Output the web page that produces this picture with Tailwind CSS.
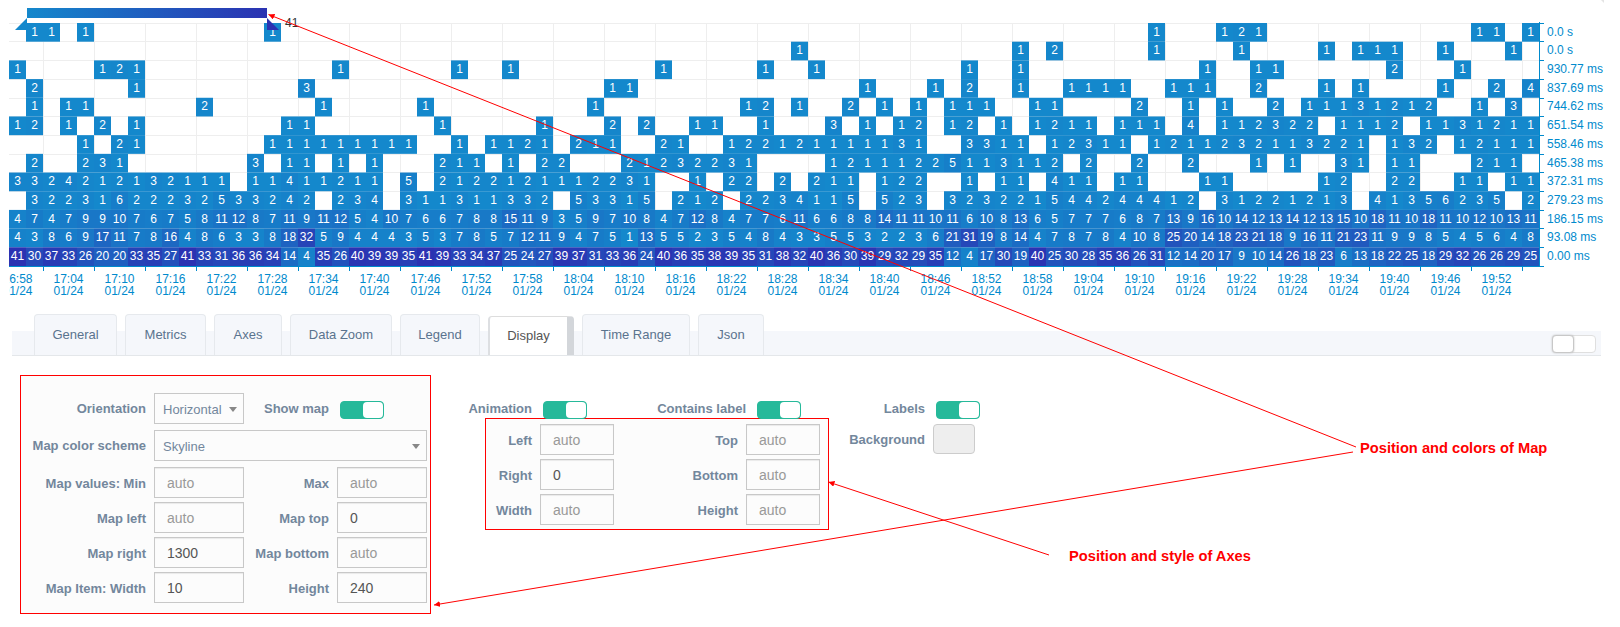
<!DOCTYPE html>
<html lang="en">
<head>
<meta charset="utf-8">
<title>Heatmap display settings</title>
<script src="https://cdn.jsdelivr.net/npm/@tailwindcss/browser@4"></script>
</head>
<body class="relative h-[627px] w-[1620px] overflow-hidden bg-white font-['Liberation_Sans',Arial,sans-serif] text-[13px] text-[#73879c]">

<section class="ml-[9px] h-[305px]">
  <svg width="1611" height="305" viewBox="9 0 1611 305" class="block overflow-hidden text-[12px]">
    <defs>
      <linearGradient id="skyline"><stop offset="0" stop-color="#1488cc"/><stop offset="1" stop-color="#2b32b2"/></linearGradient>
    </defs>
    <g id="grid" fill="#eeeeee"></g>
    <g id="cells"></g>
    <g id="values" fill="#ffffff" text-anchor="middle"></g>
    <g id="axis" fill="#008acd"></g>
    <rect x="27" y="8" width="240" height="10" fill="url(#skyline)"/>
    <path d="M27 18V30H15Z" fill="#1488cc"/>
    <path d="M267 18V30H279Z" fill="#2b32b2"/>
    <text x="285" y="27" fill="#333333">41</text>
    <path d="M1601 0H1604V3Z" fill="#e4e4e4"/>
  </svg>
</section>

<nav class="ml-3 flex h-[51px] w-[1589px] items-end">
  <div class="flex h-[25px] w-full items-end border-b border-[#e4e7ea] bg-[#f5f7fb] pl-[22px]">
    <div class="flex items-end gap-2 leading-[15px] text-[#5a738e]">
      <a class="h-[41px] w-[83px] rounded-t-[4px] border border-b-0 border-[#e6e9ed] bg-[#f5f7fb] pt-3 text-center">General</a>
      <a class="h-[41px] w-[81px] rounded-t-[4px] border border-b-0 border-[#e6e9ed] bg-[#f5f7fb] pt-3 text-center">Metrics</a>
      <a class="h-[41px] w-[68px] rounded-t-[4px] border border-b-0 border-[#e6e9ed] bg-[#f5f7fb] pt-3 text-center">Axes</a>
      <a class="h-[41px] w-[102px] rounded-t-[4px] border border-b-0 border-[#e6e9ed] bg-[#f5f7fb] pt-3 text-center">Data Zoom</a>
      <a class="h-[41px] w-[80px] rounded-t-[4px] border border-b-0 border-[#e6e9ed] bg-[#f5f7fb] pt-3 text-center">Legend</a>
      <a class="h-[39px] w-[86px] rounded-t-[4px] border border-r-[7px] border-b-0 border-l-2 border-[#d3d6da] border-t-[#dddddd] border-l-[#dddfe2] bg-white pt-[11px] text-center text-[#555]">Display</a>
      <a class="h-[41px] w-[108px] rounded-t-[4px] border border-b-0 border-[#e6e9ed] bg-[#f5f7fb] pt-3 text-center">Time Range</a>
      <a class="h-[41px] w-[66px] rounded-t-[4px] border border-b-0 border-[#e6e9ed] bg-[#f5f7fb] pt-3 text-center">Json</a>
    </div>
    <div class="mr-[5px] mb-[2px] ml-auto h-[18px] w-[44px] rounded-[4px] border border-[#dfdfdf] bg-white">
      <div class="-mt-px -ml-px h-[18px] w-[22px] rounded-[4px] border border-[#c8c8c8] bg-white shadow-[0_0_2px_#bbb]"></div>
    </div>
  </div>
</nav>

<main class="flex items-start pt-[19px] pl-5 font-bold">
  <section class="h-[239px] w-[411px] border border-[#ff0000] bg-[#fcfcfc] pt-[17px]">
    <div class="flex h-[37px] items-start">
      <label class="w-[125px] pt-2 text-right leading-[15px]">Orientation</label>
      <div class="ml-2 flex h-[31px] w-[90px] items-center justify-between border border-[#c8c8c8] pt-[3px] pr-[6px] pl-2 font-normal">Horizontal<i class="mb-[2px] h-0 w-0 border-x-4 border-t-[5px] border-x-transparent border-t-[#888]"></i></div>
      <label class="w-[85px] pt-2 text-right leading-[15px]">Show map</label>
      <div class="mt-2 ml-[11px] flex h-[18px] w-[44px] justify-end rounded-[4px] border border-[#26b99a] bg-[#26b99a]"><i class="h-4 w-5 rounded-[4px] bg-white"></i></div>
    </div>
    <div class="flex h-[37px] items-start">
      <label class="w-[125px] pt-2 text-right leading-[15px]">Map color scheme</label>
      <div class="ml-2 flex h-[31px] w-[273px] items-center justify-between border border-[#c8c8c8] pt-[3px] pr-[6px] pl-2 font-normal">Skyline<i class="mb-[2px] h-0 w-0 border-x-4 border-t-[5px] border-x-transparent border-t-[#888]"></i></div>
    </div>
    <div class="flex h-[35px] items-start">
      <label class="w-[125px] pt-[9px] text-right leading-[15px]">Map values: Min</label>
      <div class="ml-2 h-[31px] w-[90px] border border-[#c8c8c8] pt-[7px] pl-3 text-[14px] leading-4 font-normal text-[#999] shadow-[inset_0_1px_1px_rgba(0,0,0,0.075)]">auto</div>
      <label class="w-[85px] pt-[9px] text-right leading-[15px]">Max</label>
      <div class="ml-2 h-[31px] w-[90px] border border-[#c8c8c8] pt-[7px] pl-3 text-[14px] leading-4 font-normal text-[#999] shadow-[inset_0_1px_1px_rgba(0,0,0,0.075)]">auto</div>
    </div>
    <div class="flex h-[35px] items-start">
      <label class="w-[125px] pt-[9px] text-right leading-[15px]">Map left</label>
      <div class="ml-2 h-[31px] w-[90px] border border-[#c8c8c8] pt-[7px] pl-3 text-[14px] leading-4 font-normal text-[#999] shadow-[inset_0_1px_1px_rgba(0,0,0,0.075)]">auto</div>
      <label class="w-[85px] pt-[9px] text-right leading-[15px]">Map top</label>
      <div class="ml-2 h-[31px] w-[90px] border border-[#c8c8c8] pt-[7px] pl-3 text-[14px] leading-4 font-normal text-[#555] shadow-[inset_0_1px_1px_rgba(0,0,0,0.075)]">0</div>
    </div>
    <div class="flex h-[35px] items-start">
      <label class="w-[125px] pt-[9px] text-right leading-[15px]">Map right</label>
      <div class="ml-2 h-[31px] w-[90px] border border-[#c8c8c8] pt-[7px] pl-3 text-[14px] leading-4 font-normal text-[#555] shadow-[inset_0_1px_1px_rgba(0,0,0,0.075)]">1300</div>
      <label class="w-[85px] pt-[9px] text-right leading-[15px]">Map bottom</label>
      <div class="ml-2 h-[31px] w-[90px] border border-[#c8c8c8] pt-[7px] pl-3 text-[14px] leading-4 font-normal text-[#999] shadow-[inset_0_1px_1px_rgba(0,0,0,0.075)]">auto</div>
    </div>
    <div class="flex h-[35px] items-start">
      <label class="w-[125px] pt-[9px] text-right leading-[15px]">Map Item: Width</label>
      <div class="ml-2 h-[31px] w-[90px] border border-[#c8c8c8] pt-[7px] pl-3 text-[14px] leading-4 font-normal text-[#555] shadow-[inset_0_1px_1px_rgba(0,0,0,0.075)]">10</div>
      <label class="w-[85px] pt-[9px] text-right leading-[15px]">Height</label>
      <div class="ml-2 h-[31px] w-[90px] border border-[#c8c8c8] pt-[7px] pl-3 text-[14px] leading-4 font-normal text-[#555] shadow-[inset_0_1px_1px_rgba(0,0,0,0.075)]">240</div>
    </div>
  </section>

  <section class="ml-[34px] w-[364px] pt-[26px]">
    <div class="flex h-[17px] items-start">
      <label class="w-[67px] text-right leading-[15px]">Animation</label>
      <div class="ml-[11px] flex h-[18px] w-[44px] justify-end rounded-[4px] border border-[#26b99a] bg-[#26b99a]"><i class="h-4 w-5 rounded-[4px] bg-white"></i></div>
      <label class="w-[159px] text-right leading-[15px]">Contains label</label>
      <div class="ml-[11px] flex h-[18px] w-[44px] justify-end rounded-[4px] border border-[#26b99a] bg-[#26b99a]"><i class="h-4 w-5 rounded-[4px] bg-white"></i></div>
    </div>
    <div class="ml-5 h-[112px] w-[344px] border border-[#ff0000] bg-[#fcfcfc] pt-[5px]">
      <div class="flex h-[35px] items-start">
        <label class="w-[46px] pt-[9px] text-right leading-[15px]">Left</label>
        <div class="ml-2 h-[31px] w-[74px] border border-[#c8c8c8] pt-[7px] pl-3 text-[14px] leading-4 font-normal text-[#999] shadow-[inset_0_1px_1px_rgba(0,0,0,0.075)]">auto</div>
        <label class="w-[124px] pt-[9px] text-right leading-[15px]">Top</label>
        <div class="ml-2 h-[31px] w-[74px] border border-[#c8c8c8] pt-[7px] pl-3 text-[14px] leading-4 font-normal text-[#999] shadow-[inset_0_1px_1px_rgba(0,0,0,0.075)]">auto</div>
      </div>
      <div class="flex h-[35px] items-start">
        <label class="w-[46px] pt-[9px] text-right leading-[15px]">Right</label>
        <div class="ml-2 h-[31px] w-[74px] border border-[#c8c8c8] pt-[7px] pl-3 text-[14px] leading-4 font-normal text-[#555] shadow-[inset_0_1px_1px_rgba(0,0,0,0.075)]">0</div>
        <label class="w-[124px] pt-[9px] text-right leading-[15px]">Bottom</label>
        <div class="ml-2 h-[31px] w-[74px] border border-[#c8c8c8] pt-[7px] pl-3 text-[14px] leading-4 font-normal text-[#999] shadow-[inset_0_1px_1px_rgba(0,0,0,0.075)]">auto</div>
      </div>
      <div class="flex h-[35px] items-start">
        <label class="w-[46px] pt-[9px] text-right leading-[15px]">Width</label>
        <div class="ml-2 h-[31px] w-[74px] border border-[#c8c8c8] pt-[7px] pl-3 text-[14px] leading-4 font-normal text-[#999] shadow-[inset_0_1px_1px_rgba(0,0,0,0.075)]">auto</div>
        <label class="w-[124px] pt-[9px] text-right leading-[15px]">Height</label>
        <div class="ml-2 h-[31px] w-[74px] border border-[#c8c8c8] pt-[7px] pl-3 text-[14px] leading-4 font-normal text-[#999] shadow-[inset_0_1px_1px_rgba(0,0,0,0.075)]">auto</div>
      </div>
    </div>
  </section>

  <section class="w-[160px] pt-[26px]">
    <div class="flex h-[23px] items-start">
      <label class="w-24 text-right leading-[15px]">Labels</label>
      <div class="ml-[11px] flex h-[18px] w-[44px] justify-end rounded-[4px] border border-[#26b99a] bg-[#26b99a]"><i class="h-4 w-5 rounded-[4px] bg-white"></i></div>
    </div>
    <div class="flex items-start">
      <label class="w-24 pt-2 text-right leading-[15px]">Background</label>
      <div class="ml-2 h-[30px] w-[42px] rounded-[4px] border border-[#cccccc] bg-[#eeeeee]"></div>
    </div>
  </section>
</main>

<!-- Callouts drawn over the page -->
<svg width="1620" height="627" class="pointer-events-none absolute inset-0 text-[14.67px] font-bold" fill="#ff0000">
  <defs>
    <marker id="tip" markerUnits="userSpaceOnUse" markerWidth="6" markerHeight="6" refX="0" refY="3" orient="auto"><path d="M0 3L6 0V6Z"/></marker>
  </defs>
  <g stroke="#ff0000" stroke-width="1" fill="none">
    <path d="M268.500 14.500L1356 447" marker-start="url(#tip)"/>
    <path d="M434 605L1353 452" marker-start="url(#tip)"/>
    <path d="M828.500 482L1049 555" marker-start="url(#tip)"/>
  </g>
  <text x="1360" y="453">Position and colors of Map</text>
  <text x="1069" y="561">Position and style of Axes</text>
</svg>

<script>
  const LEFT = 9, RIGHT = 1539, TOP = 23, BOTTOM = 266, COL = 17;
  const ROW = (BOTTOM - TOP) / 13;
  const lines = [23, 41, 60, 79, 98, 116, 135, 154, 172, 191, 210, 228, 247, 266];
  const baselines = [36, 54, 73, 92, 110, 129, 148, 167, 185, 204, 223, 241, 260];
  const rowLabels = ['0.0 s', '0.0 s', '930.77 ms', '837.69 ms', '744.62 ms', '651.54 ms', '558.46 ms', '465.38 ms', '372.31 ms', '279.23 ms', '186.15 ms', '93.08 ms', '0.00 ms'];
  // Each row is a list of runs, "first column:values".
  const rows = [
    '1:1 1;4:1;15:1;67:1;71:1 2 1;86:1 1;89:1',
    '46:1;59:1;61:2;67:1;72:1;77:1;79:1 1 1;84:1;88:1',
    '0:1;5:1 2 1;19:1;26:1;29:1;38:1;44:1;47:1;56:1;59:1;70:1;73:1 1;81:2;85:1',
    '1:2;7:1;17:3;35:1 1;50:1;54:1;56:2;59:1;62:1 1 1 1;68:1 1 1;73:2;77:1;79:1;84:1;87:2;89:4',
    '1:1;3:1 1;11:2;18:1;24:1;34:1;43:1 2;46:1;49:2;51:1;53:1;55:1 1 1;60:1 1;66:2;69:1;71:1;74:2;76:1 1 1 3 1 2 1 2;86:1;88:3',
    '0:1 2;3:1;5:2;7:1;16:1 1;25:1;31:1;35:2;37:2;40:1 1;44:1;48:3;50:1;52:1 2;55:1 2;58:1;60:1 2 1 1;65:1 1 1;69:4;71:1 1 2 3 2 2;78:1 1 1 2;83:1 1 3 1 2 1 1',
    '4:1;6:2 1;15:1 1 1 1 1 1 1 1 1;26:1;28:1 1 2 1;33:2 1 1;38:2 1;42:1 2 2 1 2 1 1 1 1 1 3 1;56:3 3 1 1;61:1 2 3 1 1;67:1 2 1 1 2 3 2 1 1 3 2 2 1;81:1 3 2;85:1 2 1 1 1',
    '1:2;4:2 3 1;14:3;16:1 1;19:1;21:1;25:2 1 1;29:1;31:2 2;36:2 1 2 3 2 2 3 1;48:1 2 1 1 1 2 2 5 1 1 3 1 1 2;63:2;66:2;69:2;73:1;75:1;78:3 1;81:1 1;86:2 1 1',
    '0:3 3 2 4 2 1 2 1 3 2 1 1 1;14:1 1 4 1 1 2 1 1;23:5;25:2 1 2 2 1 2 1 1 1 2 2 3 1;40:1;42:2 2;45:2;47:2 1 1;51:1 2 2;56:1;58:1 1;61:4 1 1;65:1 1;70:1 1;77:1 2;81:2 2;85:1 1;88:1 1',
    '1:3 2 2 3 1 6 2 2 2 3 2 5 3 3 2 4 2;19:2 3 4;23:3 1 1 3 1 1 3 3 2;33:5 3 3 1 5;39:2 1 2;43:2 2 3 4 1 1 5;51:5 2 3;55:3 2 3 2 2 1 5 4 4 2 4 4 4 1 2;71:3 1 2 2 1 2 1 3;80:4 1 3 5 6 2 3 5;89:2',
    '0:4 7 4 7 9 9 10 7 6 7 5 8 11 12 8 7 11 9 11 12 5 4 10 7 6 6 7 8 8 15 11 9 3 5 9 7 10 8 4 7 12 8 4 7 7 6 11 6 6 8 8 14 11 11 10 11 6 10 8 13 6 5 7 7 7 6 8 7 13 9 16 10 14 12 13 14 12 13 15 10 18 11 10 18 11 10 12 10 13 11',
    '0:4 3 8 6 9 17 11 7 8 16 4 8 6 3 3 8 18 32 5 9 4 4 4 3 5 3 7 8 5 7 12 11 9 4 7 5 1 13 5 5 2 3 5 4 8 4 3 3 5 5 3 2 2 3 6 21 31 19 8 14 4 7 8 7 8 4 10 8 25 20 14 18 23 21 18 9 16 11 21 23 11 9 9 8 5 4 5 6 4 8',
    '0:41 30 37 33 26 20 20 33 35 27 41 33 31 36 36 34 14 4 35 26 40 39 39 35 41 39 33 34 37 25 24 27 39 37 31 33 36 24 40 36 35 38 39 35 31 38 32 40 36 30 39 29 32 29 35 12 4 17 30 19 40 25 30 28 35 36 26 31 12 14 20 17 9 10 14 26 18 23 6 13 18 22 25 18 29 32 26 26 29 25'
  ];

  const group = id => document.getElementById(id);
  function add(parent, tag, attrs, text) {
    const el = document.createElementNS('http://www.w3.org/2000/svg', tag);
    for (const k in attrs) el.setAttribute(k, attrs[k]);
    if (text !== undefined) el.textContent = text;
    parent.appendChild(el);
  }
  function shade(v) {
    const t = (v - 1) / 40, mix = (a, b) => Math.round(a + (b - a) * t);
    return `rgb(${mix(20, 43)},${mix(136, 50)},${mix(204, 178)})`;
  }

  const grid = group('grid'), cells = group('cells'), values = group('values'), axis = group('axis');
  for (const y of lines) {
    add(grid, 'rect', {x: LEFT, y, width: RIGHT - LEFT, height: 1});
    add(axis, 'rect', {x: RIGHT, y, width: 5, height: 1});
  }
  for (let x = 43; x < RIGHT; x += 51) {
    add(grid, 'rect', {x, y: TOP, width: 1, height: BOTTOM - TOP});
    add(axis, 'rect', {x, y: BOTTOM, width: 1, height: 5});
  }
  add(axis, 'rect', {x: LEFT, y: BOTTOM, width: RIGHT - LEFT, height: 1});
  add(axis, 'rect', {x: RIGHT, y: TOP - 1, width: 1, height: BOTTOM - TOP + 2});

  rows.forEach((row, r) => {
    for (const run of row.split(';')) {
      const [start, list] = run.split(':');
      list.split(' ').forEach((v, n) => {
        const x = LEFT + (+start + n) * COL;
        add(cells, 'rect', {x, y: TOP + r * ROW, width: COL, height: ROW, fill: shade(+v)});
        add(values, 'text', {x: x + COL / 2, y: baselines[r]}, v);
      });
    }
    add(axis, 'text', {x: 1547, y: baselines[r]}, rowLabels[r]);
  });

  for (let k = 0; k < 30; k++) {
    const minutes = 16 * 60 + 58 + 6 * k, x = 17.5 + 51 * k;
    const time = Math.floor(minutes / 60) + ':' + String(minutes % 60).padStart(2, '0');
    add(axis, 'text', {x, y: 283, 'text-anchor': 'middle'}, time);
    add(axis, 'text', {x, y: 295, 'text-anchor': 'middle'}, '01/24');
  }
</script>
</body>
</html>
